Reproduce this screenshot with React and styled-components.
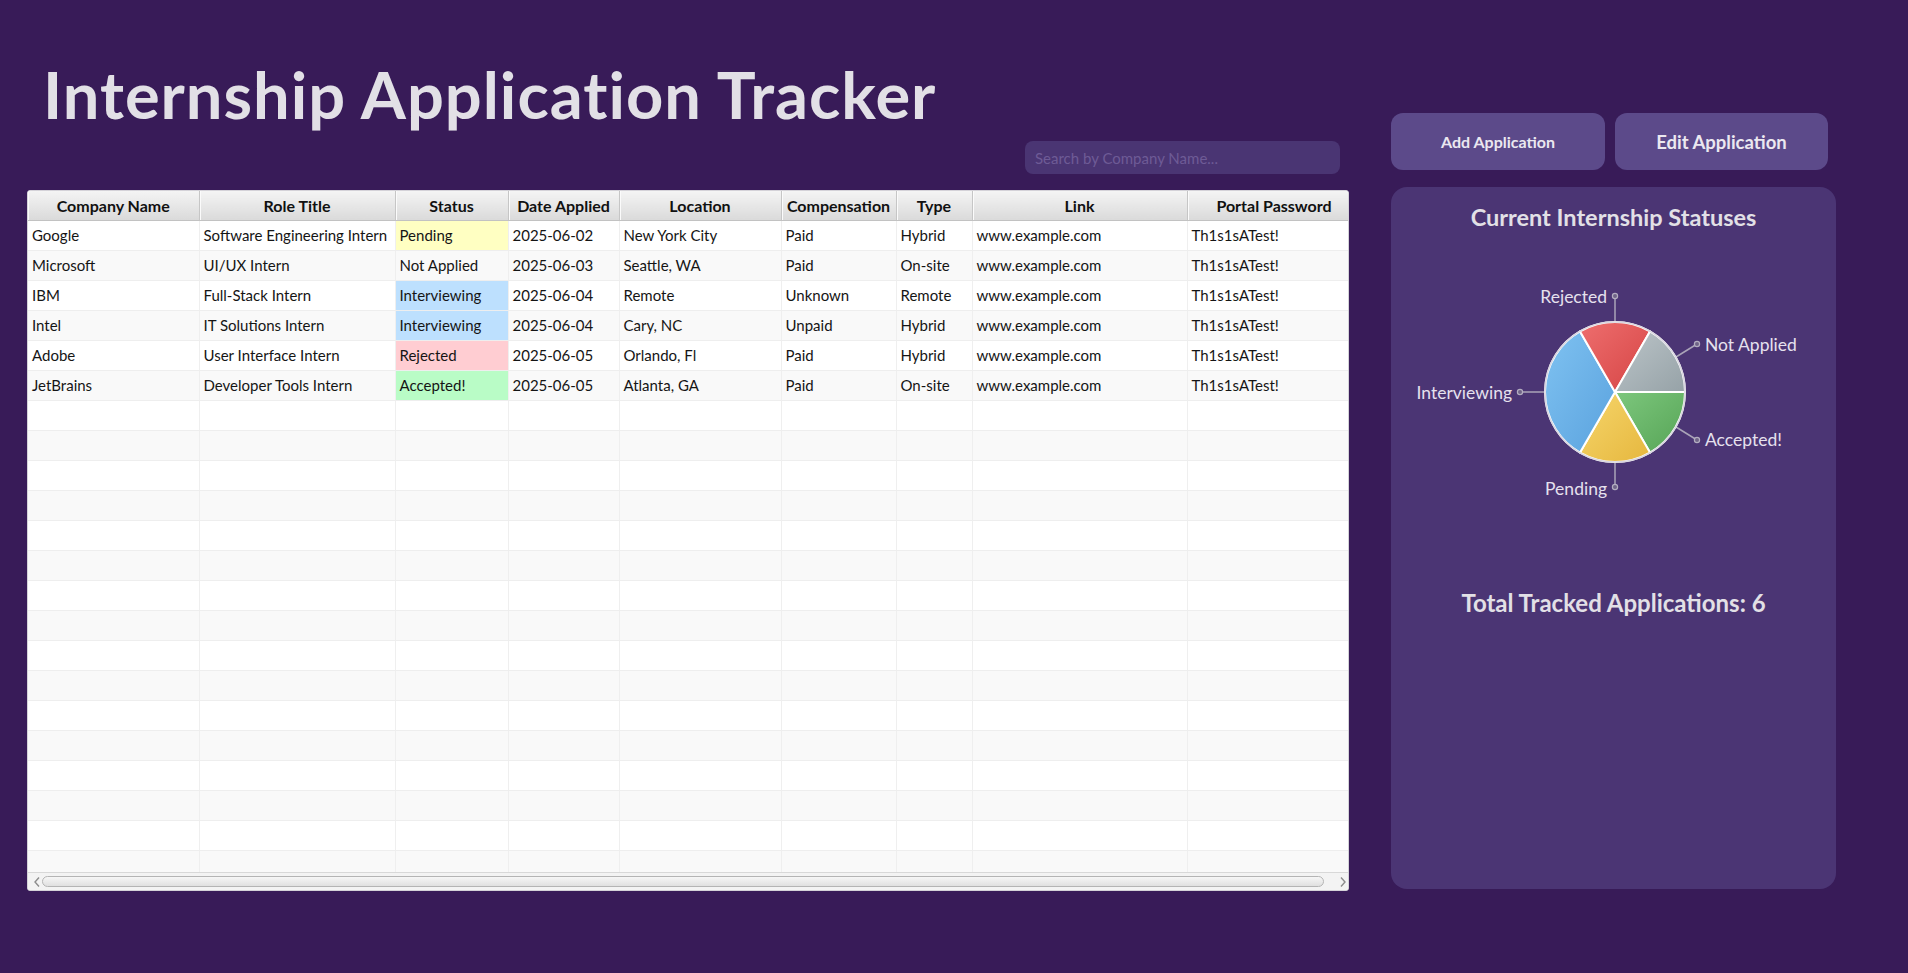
import React from 'react';
import styled, { createGlobalStyle } from 'styled-components';

const GlobalStyle = createGlobalStyle`
  html, body {
    margin: 0;
    padding: 0;
    background: #381b58;
  }
  body {
    font-family: Lato, "Open Sans", sans-serif;
  }
`;

const columns = [
  { key: 'company', title: 'Company Name', width: 171 },
  { key: 'role', title: 'Role Title', width: 196 },
  { key: 'status', title: 'Status', width: 113 },
  { key: 'date', title: 'Date Applied', width: 111 },
  { key: 'location', title: 'Location', width: 162 },
  { key: 'comp', title: 'Compensation', width: 115 },
  { key: 'type', title: 'Type', width: 76 },
  { key: 'link', title: 'Link', width: 215 },
  { key: 'password', title: 'Portal Password', width: 174 },
];

const applications = [
  { company: 'Google', role: 'Software Engineering Intern', status: 'Pending', date: '2025-06-02', location: 'New York City', comp: 'Paid', type: 'Hybrid', link: 'www.example.com', password: 'Th1s1sATest!' },
  { company: 'Microsoft', role: 'UI/UX Intern', status: 'Not Applied', date: '2025-06-03', location: 'Seattle, WA', comp: 'Paid', type: 'On-site', link: 'www.example.com', password: 'Th1s1sATest!' },
  { company: 'IBM', role: 'Full-Stack Intern', status: 'Interviewing', date: '2025-06-04', location: 'Remote', comp: 'Unknown', type: 'Remote', link: 'www.example.com', password: 'Th1s1sATest!' },
  { company: 'Intel', role: 'IT Solutions Intern', status: 'Interviewing', date: '2025-06-04', location: 'Cary, NC', comp: 'Unpaid', type: 'Hybrid', link: 'www.example.com', password: 'Th1s1sATest!' },
  { company: 'Adobe', role: 'User Interface Intern', status: 'Rejected', date: '2025-06-05', location: 'Orlando, Fl', comp: 'Paid', type: 'Hybrid', link: 'www.example.com', password: 'Th1s1sATest!' },
  { company: 'JetBrains', role: 'Developer Tools Intern', status: 'Accepted!', date: '2025-06-05', location: 'Atlanta, GA', comp: 'Paid', type: 'On-site', link: 'www.example.com', password: 'Th1s1sATest!' },
];

const statusColors = {
  'Pending': '#ffffc2',
  'Interviewing': '#bde0fe',
  'Rejected': '#ffcdd2',
  'Accepted!': '#b9fcc6',
};

const TOTAL_ROWS = 22;

// pie slices, angles clockwise from 3 o'clock
const slices = [
  { name: 'Accepted!', from: 0, to: 60, light: '#7dc77d', dark: '#56a456' },
  { name: 'Pending', from: 60, to: 120, light: '#f6d66c', dark: '#e6b73e' },
  { name: 'Interviewing', from: 120, to: 240, light: '#7fc2f1', dark: '#5aa2de' },
  { name: 'Rejected', from: 240, to: 300, light: '#ee6e6e', dark: '#d54444' },
  { name: 'Not Applied', from: 300, to: 360, light: '#bcc5c9', dark: '#96a2a7' },
];

const labels = [
  { text: 'Rejected', x1: 224, y1: 91, x2: 224, y2: 65, tx: 216, ty: 72, anchor: 'end' },
  { text: 'Not Applied', x1: 285, y1: 126, x2: 306, y2: 113, tx: 314, ty: 120, anchor: 'start' },
  { text: 'Interviewing', x1: 154, y1: 161, x2: 129, y2: 161, tx: 121, ty: 168, anchor: 'end' },
  { text: 'Accepted!', x1: 285, y1: 196, x2: 306, y2: 209, tx: 314, ty: 215, anchor: 'start' },
  { text: 'Pending', x1: 224, y1: 231, x2: 224, y2: 256, tx: 216, ty: 264, anchor: 'end' },
];

const CX = 224;
const CY = 161;
const R = 70;

const point = (deg) => {
  const a = (deg * Math.PI) / 180;
  return [CX + R * Math.cos(a), CY + R * Math.sin(a)];
};

const slicePath = (from, to) => {
  const [x1, y1] = point(from);
  const [x2, y2] = point(to);
  const large = to - from > 180 ? 1 : 0;
  return `M${CX},${CY} L${x1.toFixed(2)},${y1.toFixed(2)} A${R},${R} 0 ${large} 1 ${x2.toFixed(2)},${y2.toFixed(2)} Z`;
};

export default function App() {
  const rows = [];
  for (let i = 0; i < TOTAL_ROWS; i++) rows.push(applications[i] || null);

  return (
    <>
      <GlobalStyle />
      <Page>
        <LeftColumn>
          <Title>Internship Application Tracker</Title>
          <SearchRow>
            <SearchInput placeholder="Search by Company Name..." />
          </SearchRow>
          <TableFrame>
            <TableClip>
              <Grid>
                <colgroup>
                  {columns.map(c => <col key={c.key} style={{ width: c.width }} />)}
                </colgroup>
                <thead>
                  <tr>
                    {columns.map(c => <HeadCell key={c.key}>{c.title}</HeadCell>)}
                  </tr>
                </thead>
                <tbody>
                  {rows.map((row, i) => (
                    <Row key={i} $alt={i % 2 === 1}>
                      {columns.map(c => (
                        <Cell
                          key={c.key}
                          $fill={row && c.key === 'status' ? statusColors[row.status] : null}
                        >
                          {row ? row[c.key] : ''}
                        </Cell>
                      ))}
                    </Row>
                  ))}
                </tbody>
              </Grid>
            </TableClip>
            <ScrollBar>
              <Arrow viewBox="0 0 8 12">
                <path d="M6 1.5 L2 6 L6 10.5" />
              </Arrow>
              <Thumb />
              <Arrow viewBox="0 0 8 12">
                <path d="M2 1.5 L6 6 L2 10.5" />
              </Arrow>
            </ScrollBar>
          </TableFrame>
        </LeftColumn>

        <RightColumn>
          <ButtonRow>
            <ActionButton $w={214} $size={16}>Add Application</ActionButton>
            <ActionButton $w={213} $size={18.5}>Edit Application</ActionButton>
          </ButtonRow>
          <Panel>
            <PanelTitle>Current Internship Statuses</PanelTitle>
            <PieSvg width="445" height="280" viewBox="0 0 445 280">
              <defs>
                {slices.map((s, i) => (
                  <linearGradient key={i} id={`sl${i}`} x1="0" y1="0" x2="1" y2="1">
                    <stop offset="0" stopColor={s.light} />
                    <stop offset="1" stopColor={s.dark} />
                  </linearGradient>
                ))}
              </defs>
              {labels.map(l => (
                <g key={l.text}>
                  <line x1={l.x1} y1={l.y1} x2={l.x2} y2={l.y2} stroke="#aaa4b8" strokeWidth="1.5" />
                  <circle cx={l.x2} cy={l.y2} r="2.6" fill="#6f6487" stroke="#b3adc0" strokeWidth="1.2" />
                  <PieLabel x={l.tx} y={l.ty} textAnchor={l.anchor}>{l.text}</PieLabel>
                </g>
              ))}
              {slices.map((s, i) => (
                <path key={s.name} d={slicePath(s.from, s.to)} fill={`url(#sl${i})`} stroke="#ffffff" strokeWidth="2" strokeLinejoin="round" />
              ))}
              <circle cx={CX} cy={CY} r={R} fill="none" stroke="#d9d6e0" strokeWidth="1.5" />
            </PieSvg>
            <TotalText>Total Tracked Applications: {applications.length}</TotalText>
          </Panel>
        </RightColumn>
      </Page>
    </>
  );
}

const Page = styled.div`
  display: flex;
  align-items: flex-start;
  gap: 42px;
  padding: 0 27px;
  width: 1908px;
  height: 973px;
  box-sizing: border-box;
  background: #381b58;
`;

const LeftColumn = styled.div`
  width: 1322px;
  display: flex;
  flex-direction: column;
  padding-top: 61px;
`;

const Title = styled.h1`
  margin: 0 0 0 16px;
  font-family: Lato, sans-serif;
  font-weight: 700;
  font-size: 65px;
  letter-spacing: 1px;
  line-height: 66px;
  color: #e2e0e6;
  white-space: nowrap;
`;

const SearchRow = styled.div`
  display: flex;
  justify-content: flex-end;
  padding-right: 9px;
  margin: 14px 0 16px;
`;

const SearchInput = styled.input`
  width: 315px;
  height: 33px;
  box-sizing: border-box;
  border: none;
  outline: none;
  border-radius: 8px;
  background: #4a3573;
  padding: 0 10px;
  font-family: Lato, sans-serif;
  font-size: 15px;
  color: #e2e0e6;
  &::placeholder {
    color: #6e5b96;
  }
`;

const TableFrame = styled.div`
  width: 1322px;
  height: 701px;
  box-sizing: border-box;
  background: #ffffff;
  border: 1px solid #d4d2d8;
  border-radius: 3px;
  display: flex;
  flex-direction: column;
  overflow: hidden;
`;

const TableClip = styled.div`
  flex: 1;
  overflow: hidden;
`;

const Grid = styled.table`
  table-layout: fixed;
  width: 1333px;
  border-collapse: collapse;
  border-spacing: 0;
  font-family: Lato, sans-serif;
`;

const HeadCell = styled.th`
  height: 29px;
  padding: 0 4px;
  box-sizing: border-box;
  background: linear-gradient(#f4f4f4, #dadada);
  border-right: 1px solid #c6c6c6;
  border-bottom: 1px solid #c2c2c2;
  box-shadow: inset 1px 0 0 #fbfbfb;
  font-size: 16px;
  font-weight: 700;
  line-height: 29px;
  color: #111111;
  text-align: center;
  white-space: nowrap;
  overflow: hidden;
`;

const Row = styled.tr`
  background: ${p => (p.$alt ? '#f9f9f9' : '#ffffff')};
`;

const Cell = styled.td`
  height: 30px;
  padding: 0 4px;
  box-sizing: border-box;
  background: ${p => p.$fill || 'transparent'};
  border-right: 1px solid #efefef;
  border-bottom: 1px solid #eeeeee;
  font-size: 15px;
  line-height: 29px;
  color: #151515;
  white-space: nowrap;
  overflow: hidden;
`;

const ScrollBar = styled.div`
  height: 17px;
  flex: none;
  display: flex;
  align-items: center;
  padding-left: 5px;
  background: #f3f3f3;
  border-top: 1px solid #d8d8d8;
`;

const Arrow = styled.svg`
  width: 8px;
  height: 12px;
  flex: none;
  path {
    fill: none;
    stroke: #8c8c8c;
    stroke-width: 1.4;
  }
`;

const Thumb = styled.div`
  flex: none;
  width: 1282px;
  height: 11px;
  box-sizing: border-box;
  border: 1px solid #b4b4b4;
  border-radius: 6px;
  background: linear-gradient(#f6f6f6, #e0e0e0);
  margin: 0 15px 0 1px;
`;

const RightColumn = styled.div`
  width: 445px;
  display: flex;
  flex-direction: column;
  padding-top: 113px;
`;

const ButtonRow = styled.div`
  display: flex;
  gap: 10px;
  margin-bottom: 17px;
`;

const ActionButton = styled.button`
  width: ${p => p.$w}px;
  height: 57px;
  border: none;
  border-radius: 12px;
  background: #5c4a8a;
  color: #ebe8f0;
  font-family: Lato, sans-serif;
  font-weight: 700;
  font-size: ${p => p.$size}px;
  cursor: pointer;
`;

const Panel = styled.div`
  height: 702px;
  box-sizing: border-box;
  background: #4b3574;
  border-radius: 16px;
  padding-top: 16px;
  display: flex;
  flex-direction: column;
  align-items: center;
`;

const PanelTitle = styled.div`
  font-family: Lato, sans-serif;
  font-weight: 700;
  font-size: 23.5px;
  line-height: 28px;
  color: #e2e0e6;
`;

const PieSvg = styled.svg`
  display: block;
  flex: none;
`;

const PieLabel = styled.text`
  font-family: Lato, sans-serif;
  font-size: 17.5px;
  fill: #e6e1ee;
`;

const TotalText = styled.div`
  margin-top: 78px;
  font-family: Lato, sans-serif;
  font-weight: 700;
  font-size: 24px;
  line-height: 28px;
  color: #e2e0e6;
`;
